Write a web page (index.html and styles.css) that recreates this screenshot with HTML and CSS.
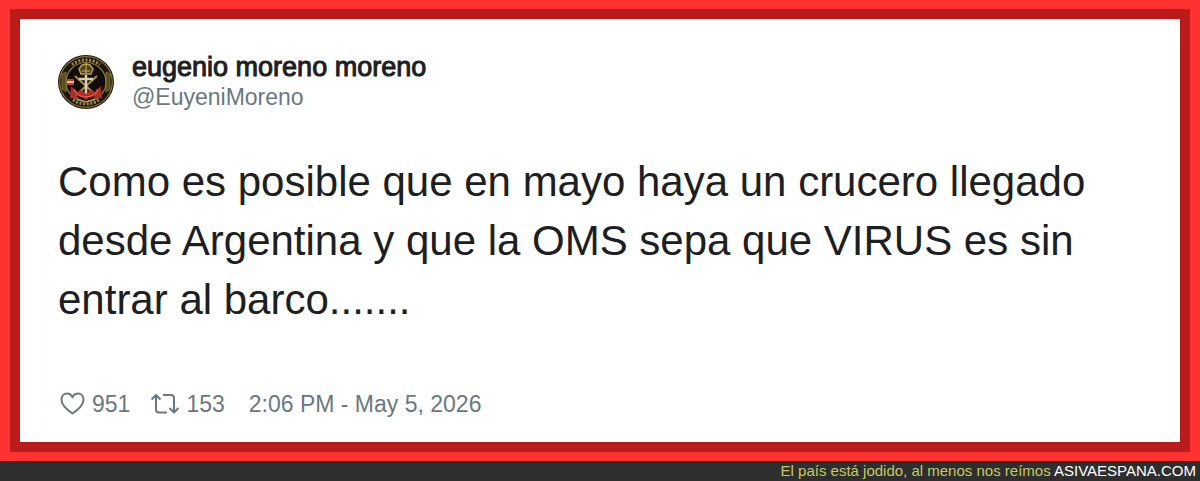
FILE: index.html
```
<!DOCTYPE html>
<html lang="es">
<head>
  <meta charset="UTF-8">
  <meta name="viewport" content="width=device-width, initial-scale=1">
  <title>eugenio moreno moreno</title>
  <link rel="stylesheet" href="styles.css">
</head>
<body>

  <main class="frame">
    <article class="tweet">
      <header class="author">
        <svg class="avatar" viewBox="0 0 58 56" aria-hidden="true">
          <ellipse cx="28" cy="28" rx="28" ry="27" fill="#1a150f"/>
          <ellipse cx="28" cy="28" rx="26.300" ry="25.300" fill="none" stroke="#8b763a" stroke-width="1.2"/>
          <ellipse cx="28" cy="28" rx="20" ry="19.500" fill="#100d0c" stroke="#8f7a38" stroke-width="1.200"/>
          <!-- lettering ring -->
          <path d="M14 10.500A23 22 0 0 1 42 10.500M15 46A23 22 0 0 0 41 46" fill="none" stroke="#a08a48" stroke-width="3" stroke-dasharray="2 1.600"/>
          <path d="M4 20v15l4 3V18zM52 20v15l-4 3V18z" fill="#5a4a20" stroke="#96803e" stroke-width=".7"/>
          <!-- crown -->
          <path d="M23 20l-2-5 3-4 4-1 4 1 3 4-2 5z" fill="#4e4020" stroke="#b59c4e" stroke-width="1.500"/>
          <path d="M28 9v11M24 17h8" stroke="#c9b35f" stroke-width="1"/>
          <!-- crossed rifles -->
          <path d="M17 22l24 22M39 22L15 44" stroke="#b08d43" stroke-width="2"/>
          <!-- anchor -->
          <path d="M28 21v21M21 25h14" stroke="#d8d0b4" stroke-width="2.500"/>
          <path d="M13 32l-1 12 9 0-3-3c3 0 6 1 10 5 4-4 7-5 10-5l-3 3h9l-1-12-6 6-5-2-4 4-4-4-5 2z" fill="#b02c24"/>
          <path d="M16 35c2 5 6 8 12 8s10-3 12-8" fill="none" stroke="#dd5545" stroke-width="1.500"/>
          <path d="M19 45l9 3 9-3" fill="none" stroke="#b1964b" stroke-width="1.500"/>
          <path d="M9 25h7v6H9z" fill="#c53a2d"/>
          <path d="M9 27h7v2H9z" fill="#e3c3a3"/>
        </svg>
        <div>
          <h1 class="name">eugenio moreno moreno</h1>
          <p class="handle">@EuyeniMoreno</p>
        </div>
      </header>

      <p class="text">Como es posible que en mayo haya un crucero llegado desde Argentina y que la OMS sepa que VIRUS es sin entrar al barco.......</p>

      <footer class="meta">
        <div class="stats">
          <span class="stat">
            <svg class="heart" viewBox="0 0 28 24" aria-hidden="true">
              <path d="M14.500 21.500C11.500 19.500 3.500 14 3.500 7.800C3.500 4 6 1.500 9 1.500C11.500 1.500 13.500 3 14.500 5.300C15.500 3 17.500 1.500 20 1.500C23 1.500 25.500 4 25.500 7.800C25.500 14 17.500 19.500 14.500 21.500Z"/>
            </svg>
            951
          </span>
          <span class="stat">
            <svg class="retweet" viewBox="0 0 30 22" aria-hidden="true">
              <path d="M1.500 6.500L6 2l4.500 4.500M6 2v14.500q0 3 3 3h8M13 2h8q3 0 3 3v14.500M19.500 15L24 19.500l4.500-4.500"/>
            </svg>
            153
          </span>
        </div>
        <time class="date" datetime="2026-05-05T14:06">2:06 PM - May 5, 2026</time>
      </footer>
    </article>
  </main>

  <footer class="bar">
    <span class="slogan">El país está jodido, al menos nos reímos</span>
    <span class="site">ASIVAESPANA.COM</span>
  </footer>

</body>
</html>
```
FILE: styles.css
```
* {
  box-sizing: border-box;
}

body {
  margin: 0;
  min-height: 100vh;
  display: flex;
  flex-direction: column;
  font-family: "Liberation Sans", Arial, sans-serif;
  background: #ff3232;
}

h1,
p {
  margin: 0;
}

.frame {
  flex: 1;
  display: flex;
  padding: 9px 10px;
}

.tweet {
  flex: 1;
  padding: 33px 38px 23px;
  border: 10px solid #b91c1a;
  background: #fff;
  color: #1c2022;
}

.author {
  display: flex;
  align-items: center;
  gap: 16px;
}

.avatar {
  width: 58px;
  height: 56px;
}

.name {
  font-size: 27px;
  line-height: 30px;
  font-weight: normal;
  -webkit-text-stroke: 1px #1c2022;
}

.handle {
  font-size: 23px;
  line-height: 30px;
  color: #697882;
}

.text {
  margin-top: 40px;
  font-size: 42px;
  line-height: 59px;
}

.meta {
  display: flex;
  align-items: center;
  gap: 24px;
  margin-top: 60px;
  font-size: 23px;
  line-height: 30px;
  color: #697882;
}

.stats {
  display: flex;
  gap: 20px;
}

.stat {
  display: flex;
  align-items: center;
  gap: 6px;
}

.heart,
.retweet {
  fill: none;
  stroke: #697882;
  stroke-width: 2;
  stroke-linejoin: round;
}

.heart {
  width: 28px;
  height: 24px;
}

.retweet {
  width: 30px;
  height: 22px;
}

.bar {
  padding: 0 4px;
  font-size: 15px;
  line-height: 20px;
  text-align: right;
  background: #2e2e2e;
}

.slogan {
  color: #c8c864;
}

.site {
  color: #fff;
}
```
